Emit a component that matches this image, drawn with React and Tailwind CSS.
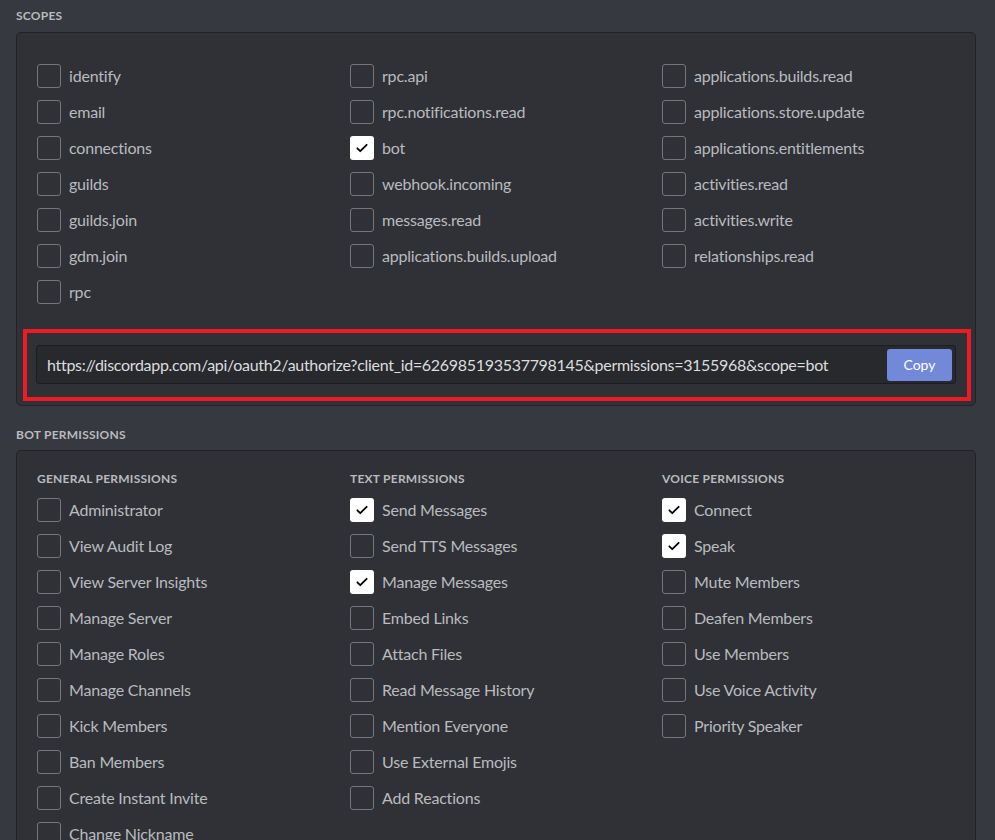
import React from "react";

const font = { fontFamily: "Lato, 'Noto Sans', sans-serif" };

const scopes = [
  [
    ["identify"],
    ["email"],
    ["connections"],
    ["guilds"],
    ["guilds.join"],
    ["gdm.join"],
    ["rpc"],
  ],
  [
    ["rpc.api"],
    ["rpc.notifications.read"],
    ["bot", true],
    ["webhook.incoming"],
    ["messages.read"],
    ["applications.builds.upload"],
  ],
  [
    ["applications.builds.read"],
    ["applications.store.update"],
    ["applications.entitlements"],
    ["activities.read"],
    ["activities.write"],
    ["relationships.read"],
  ],
];

const permissions = [
  {
    title: "General Permissions",
    items: [
      ["Administrator"],
      ["View Audit Log"],
      ["View Server Insights"],
      ["Manage Server"],
      ["Manage Roles"],
      ["Manage Channels"],
      ["Kick Members"],
      ["Ban Members"],
      ["Create Instant Invite"],
      ["Change Nickname"],
      ["Manage Nicknames"],
      ["Manage Emojis"],
    ],
  },
  {
    title: "Text Permissions",
    items: [
      ["Send Messages", true],
      ["Send TTS Messages"],
      ["Manage Messages", true],
      ["Embed Links"],
      ["Attach Files"],
      ["Read Message History"],
      ["Mention Everyone"],
      ["Use External Emojis"],
      ["Add Reactions"],
    ],
  },
  {
    title: "Voice Permissions",
    items: [
      ["Connect", true],
      ["Speak", true],
      ["Mute Members"],
      ["Deafen Members"],
      ["Use Members"],
      ["Use Voice Activity"],
      ["Priority Speaker"],
    ],
  },
];

function Check({ label, checked }) {
  return (
    <label className="flex items-center h-9 cursor-pointer">
      <span
        className={`w-6 h-6 rounded-[3px] flex items-center justify-center shrink-0 ${
          checked ? "bg-white" : "border border-[#72767d]"
        }`}
      >
        {checked && (
          <svg width="14" height="14" viewBox="0 0 24 24" fill="none">
            <path
              d="M4 12.5l5 5L20 6.5"
              stroke="#000"
              strokeWidth="3"
              strokeLinecap="round"
              strokeLinejoin="round"
            />
          </svg>
        )}
      </span>
      <span className="ml-2 text-[16px] tracking-[-0.2px] text-[#b9bbbe] whitespace-nowrap">{label}</span>
    </label>
  );
}

function SectionLabel({ children }) {
  return (
    <div className="text-[12px] leading-4 font-bold uppercase tracking-[0.02em] text-[#b9bbbe]">
      {children}
    </div>
  );
}

export default function App() {
  return (
    <div className="min-h-[840px] h-[840px] overflow-hidden bg-[#36393f] px-4 pt-2" style={font}>
      <SectionLabel>Scopes</SectionLabel>
      <div className="mt-2 w-[960px] rounded-[5px] border border-[#202225] bg-[#2f3136]">
        <div className="grid grid-cols-[313px_312px_1fr] pl-5 pt-[25px]">
          {scopes.map((col, i) => (
            <div key={i} className="flex flex-col">
              {col.map(([label, checked]) => (
                <Check key={label} label={label} checked={checked} />
              ))}
            </div>
          ))}
        </div>
        <div className="ml-[6px] mr-[4px] mt-[19px] mb-[4px] border-4 border-[#ed1c24] pl-[9px] pr-[11px] pt-[12px] pb-[13px]">
          <div className="flex items-center h-[39px] rounded-[3px] border border-[#1c1d20] bg-[#27292d] pl-[10px] pr-[3px]">
            <span className="flex-1 text-[16px] tracking-[-0.3px] text-[#dcddde] whitespace-nowrap overflow-hidden">
              https://discordapp.com/api/oauth2/authorize?client_id=626985193537798145&amp;permissions=3155968&amp;scope=bot
            </span>
            <button className="w-[65px] h-[32px] rounded-[3px] bg-[#7289da] text-white text-[14px]">
              Copy
            </button>
          </div>
        </div>
      </div>

      <div className="mt-[21px]">
        <SectionLabel>Bot Permissions</SectionLabel>
      </div>
      <div className="mt-[7px] w-[960px] rounded-[5px] border border-[#202225] bg-[#2f3136]">
        <div className="grid grid-cols-[313px_312px_1fr] pl-5 pt-[20px] pb-5">
          {permissions.map((col) => (
            <div key={col.title} className="flex flex-col">
              <div className="mb-[5px]">
                <SectionLabel>{col.title}</SectionLabel>
              </div>
              {col.items.map(([label, checked]) => (
                <Check key={label} label={label} checked={checked} />
              ))}
            </div>
          ))}
        </div>
      </div>
    </div>
  );
}
